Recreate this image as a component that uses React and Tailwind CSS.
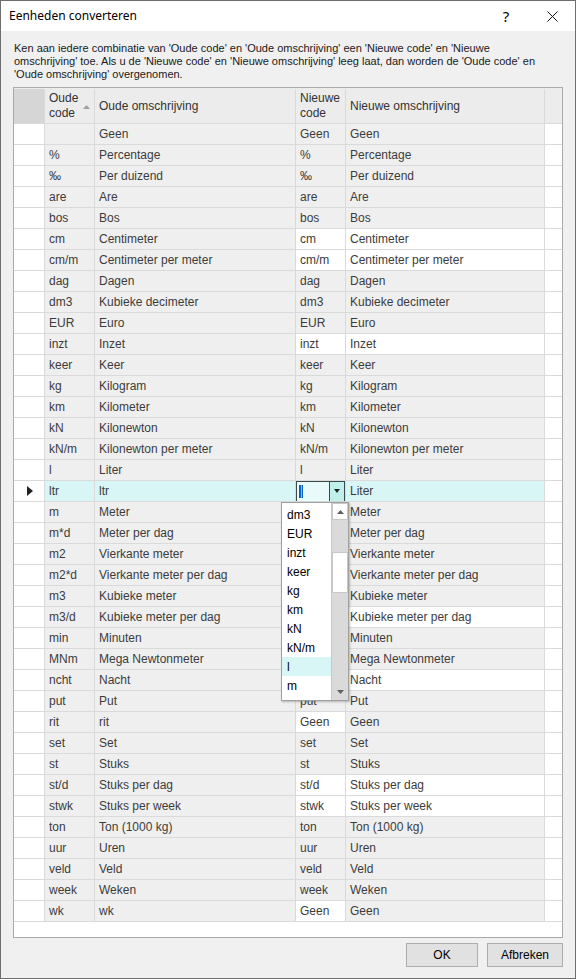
import React from "react";

// rows: [oudeCode, oudeOmschr, nieuweCode, nieuweOmschr, witte cellen ("both" | "code")]
const rows = [
    ["", "Geen", "Geen", "Geen"],
    ["%", "Percentage", "%", "Percentage"],
    ["‰", "Per duizend", "‰", "Per duizend"],
    ["are", "Are", "are", "Are"],
    ["bos", "Bos", "bos", "Bos"],
    ["cm", "Centimeter", "cm", "Centimeter", "both"],
    ["cm/m", "Centimeter per meter", "cm/m", "Centimeter per meter", "both"],
    ["dag", "Dagen", "dag", "Dagen"],
    ["dm3", "Kubieke decimeter", "dm3", "Kubieke decimeter"],
    ["EUR", "Euro", "EUR", "Euro"],
    ["inzt", "Inzet", "inzt", "Inzet", "both"],
    ["keer", "Keer", "keer", "Keer"],
    ["kg", "Kilogram", "kg", "Kilogram"],
    ["km", "Kilometer", "km", "Kilometer"],
    ["kN", "Kilonewton", "kN", "Kilonewton"],
    ["kN/m", "Kilonewton per meter", "kN/m", "Kilonewton per meter"],
    ["l", "Liter", "l", "Liter"],
    ["ltr", "ltr", "l", "Liter", "selected"],
    ["m", "Meter", "", "Meter"],
    ["m*d", "Meter per dag", "", "Meter per dag"],
    ["m2", "Vierkante meter", "", "Vierkante meter"],
    ["m2*d", "Vierkante meter per dag", "", "Vierkante meter per dag"],
    ["m3", "Kubieke meter", "", "Kubieke meter"],
    ["m3/d", "Kubieke meter per dag", "", "Kubieke meter per dag", "both"],
    ["min", "Minuten", "", "Minuten"],
    ["MNm", "Mega Newtonmeter", "", "Mega Newtonmeter"],
    ["ncht", "Nacht", "", "Nacht", "both"],
    ["put", "Put", "put", "Put"],
    ["rit", "rit", "Geen", "Geen", "code"],
    ["set", "Set", "set", "Set"],
    ["st", "Stuks", "st", "Stuks"],
    ["st/d", "Stuks per dag", "st/d", "Stuks per dag", "both"],
    ["stwk", "Stuks per week", "stwk", "Stuks per week", "both"],
    ["ton", "Ton (1000 kg)", "ton", "Ton (1000 kg)"],
    ["uur", "Uren", "uur", "Uren"],
    ["veld", "Veld", "veld", "Veld"],
    ["week", "Weken", "week", "Weken"],
    ["wk", "wk", "Geen", "Geen", "code"],
];

const dropdownItems = ["dm3", "EUR", "inzt", "keer", "kg", "km", "kN", "kN/m", "l", "m"];

const cell = "h-full flex items-center border-r border-[#dadada] overflow-hidden whitespace-nowrap";

const Row = ({ row }) => {
    const [oc, oo, nc, no, flag] = row;
    const selected = flag === "selected";
    const base = selected ? "bg-[#d9f6f6]" : "bg-[#efefef]";
    const codeBg = flag === "both" || flag === "code" ? "bg-white" : base;
    const omsBg = flag === "both" ? "bg-white" : base;

    return (
        <div className="flex h-[21px] border-b border-[#dadada] text-[#3c3c3c]">
            <div className={`${cell} w-[31px] bg-white justify-center`}>
                {selected && (
                    <svg width="6" height="10" viewBox="0 0 6 10" className="ml-[1px]">
                        <path d="M0 0 L6 5 L0 10 Z" fill="#222" />
                    </svg>
                )}
            </div>
            <div className={`${cell} w-[50px] pl-[4px] ${base}`}>{oc}</div>
            <div className={`${cell} w-[201px] pl-[4px] ${base}`}>{oo}</div>
            {selected ? (
                <div className={`${cell} w-[50px] ${base}`}>
                    {/* cell editor */}
                    <div className="flex h-[21px] w-[50px] border border-[#3b4a4a] bg-[#e8fafa]">
                        <div className="flex flex-1 items-center pl-[2px]">
                            <span className="h-[13px] w-[4px] bg-[#0a64c8] flex justify-center">
                                <span className="h-[13px] w-[1px] bg-[#f6a04a]" />
                            </span>
                        </div>
                        <div className="flex w-[15px] items-center justify-center border-l border-[#3b4a4a] bg-[#bff0ec]">
                            <svg width="6" height="4" viewBox="0 0 6 4">
                                <path d="M0 0 L6 0 L3 4 Z" fill="#222" />
                            </svg>
                        </div>
                    </div>
                </div>
            ) : (
                <div className={`${cell} w-[50px] pl-[4px] ${codeBg}`}>{nc}</div>
            )}
            <div className={`${cell} w-[199px] pl-[4px] ${omsBg}`}>{no}</div>
        </div>
    );
};

export default function App() {
    return (
        <div
            className="relative w-[576px] h-[979px] flex flex-col border border-[#6e6e6e] bg-[#f0f0f0] text-[12px] overflow-hidden"
            style={{ fontFamily: '"Liberation Sans", Arial, sans-serif' }}
        >
            {/* Title bar */}
            <div className="flex h-[30px] shrink-0 items-center bg-white">
                <div className="pl-[8px] text-[12px] text-black" style={{ fontFamily: '"Noto Sans", "Open Sans", sans-serif' }}>
                    Eenheden converteren
                </div>
                <div className="ml-auto w-[46px] text-center text-[15px] text-black" style={{ fontFamily: '"Noto Sans", sans-serif' }}>
                    ?
                </div>
                <div className="flex w-[46px] justify-center">
                    <svg width="11" height="11" viewBox="0 0 11 11">
                        <path d="M0.5 0.5 L10.5 10.5 M10.5 0.5 L0.5 10.5" stroke="#111" strokeWidth="1" />
                    </svg>
                </div>
            </div>

            {/* Body */}
            <div className="flex flex-1 flex-col px-[12px]">
                <p className="mt-[11px] pl-[1px] text-[11px] leading-[13px] whitespace-nowrap text-[#1a1a1a]">
                    Ken aan iedere combinatie van 'Oude code' en 'Oude omschrijving' een 'Nieuwe code' en 'Nieuwe
                    <br />
                    omschrijving' toe. Als u de 'Nieuwe code' en 'Nieuwe omschrijving' leeg laat, dan worden de 'Oude code' en
                    <br />
                    'Oude omschrijving' overgenomen.
                </p>

                {/* Grid */}
                <div className="mt-[6px] h-[851px] border border-[#a9a9a9] bg-white">
                    <div className="flex h-[36px] border-b border-[#dadada] bg-[#ececec] text-[#333] pt-[1px]">
                        <div className="w-[31px] border-r border-[#dadada] bg-[#d6d6d6]" />
                        <div className="relative flex w-[50px] flex-col justify-center border-r border-[#dadada] pl-[4px] leading-[15px]">
                            <span>Oude</span>
                            <span>code</span>
                            <svg width="7" height="4" viewBox="0 0 7 4" className="absolute right-[4px] top-[16px]">
                                <path d="M0 4 L3.5 0 L7 4 Z" fill="#a0a0a0" />
                            </svg>
                        </div>
                        <div className="flex w-[201px] items-center border-r border-[#dadada] pl-[4px]">Oude omschrijving</div>
                        <div className="flex w-[50px] flex-col justify-center border-r border-[#dadada] pl-[4px] leading-[15px]">
                            <span>Nieuwe</span>
                            <span>code</span>
                        </div>
                        <div className="flex w-[199px] items-center border-r border-[#dadada] pl-[4px]">Nieuwe omschrijving</div>
                    </div>
                    {rows.map((r, i) => (
                        <Row key={i} row={r} />
                    ))}
                </div>

                {/* Buttons */}
                <div className="mt-[5px] flex justify-end gap-[9px]">
                    <button className="h-[24px] w-[72px] border border-[#adadad] bg-[#e1e1e1] text-[12px] text-black">OK</button>
                    <button className="h-[24px] w-[76px] border border-[#adadad] bg-[#e1e1e1] text-[12px] text-black">Afbreken</button>
                </div>
            </div>

            {/* Open dropdown of the cell editor */}
            <div className="absolute left-[280px] top-[501px] flex h-[199px] w-[68px] border border-[#a0a0a0] bg-white shadow-[1px_1px_2px_rgba(0,0,0,0.25)]">
                <div className="flex flex-1 flex-col pt-[2px]">
                    {dropdownItems.map((it) => (
                        <div
                            key={it}
                            className={`flex h-[19px] items-center pl-[5px] text-[12px] text-black ${it === "l" ? "bg-[#d9f6f6]" : ""}`}
                        >
                            {it}
                        </div>
                    ))}
                </div>
                <div className="flex w-[17px] flex-col bg-[#dadada] border-l border-[#c8c8c8]">
                    <div className="flex h-[17px] items-center justify-center border border-[#c8c8c8] bg-white">
                        <svg width="7" height="4" viewBox="0 0 7 4">
                            <path d="M0 4 L3.5 0 L7 4 Z" fill="#606060" />
                        </svg>
                    </div>
                    <div className="mt-[32px] h-[41px] border border-[#c8c8c8] bg-white" />
                    <div className="mt-auto flex h-[17px] items-center justify-center">
                        <svg width="7" height="4" viewBox="0 0 7 4">
                            <path d="M0 0 L7 0 L3.5 4 Z" fill="#606060" />
                        </svg>
                    </div>
                </div>
            </div>
        </div>
    );
}
